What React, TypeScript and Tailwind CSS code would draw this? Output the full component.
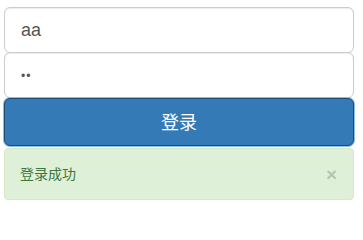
import React from "react";

export default function App() {
  return (
    <div
      className="w-[363px] h-[205px] bg-white px-[4px] pt-[7px]"
      style={{ fontFamily: '"Liberation Sans", "Noto Sans CJK SC", sans-serif' }}
    >
      <div className="w-[350px] flex flex-col">
        <div className="h-[46px] border border-[#ccc] rounded-[6px] bg-white shadow-[inset_0_1px_1px_rgba(0,0,0,0.075)] flex items-center px-[16px] text-[18px] text-[#555]">
          aa
        </div>
        <div className="-mt-px h-[46px] border border-[#ccc] rounded-[6px] bg-white shadow-[inset_0_1px_1px_rgba(0,0,0,0.075)] flex items-center px-[16px] text-[#555]">
          <span className="text-[12px] tracking-[1px] leading-none mt-[2px]">••</span>
        </div>
        <div className="h-[48px] rounded-[6px] bg-[#337ab7] border border-[#204d74] ring-1 ring-[#8fbbe8] flex items-center justify-center pt-[2px] text-white text-[18px]">
          登录
        </div>
        <div className="mt-[2px] h-[52px] rounded-[4px] bg-[#dff0d8] border border-[#d6e9c6] flex items-center justify-between pl-[15px] pr-[16px] text-[14px] text-[#3c763d]">
          <span>登录成功</span>
          <span className="text-[19px] font-bold text-black/20 leading-none">×</span>
        </div>
      </div>
    </div>
  );
}
